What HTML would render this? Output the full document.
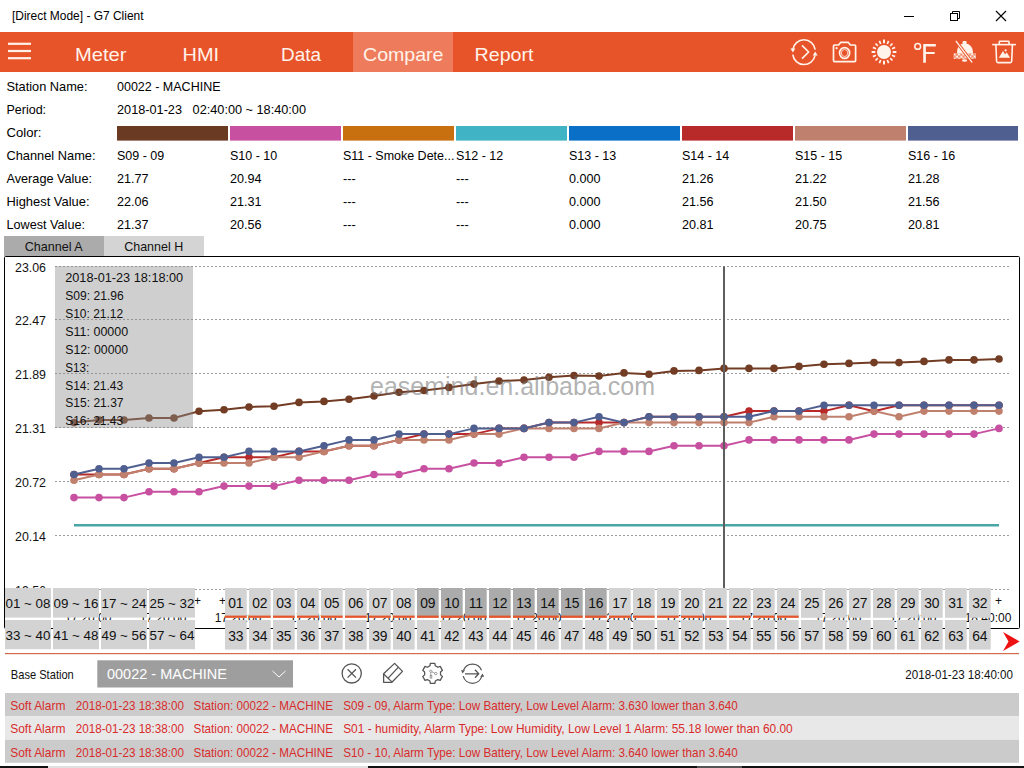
<!DOCTYPE html>
<html><head><meta charset="utf-8"><title>G7 Client</title>
<style>html,body{margin:0;padding:0;width:1024px;height:768px;overflow:hidden;background:#fff}
svg{display:block} text{font-family:"Liberation Sans", sans-serif;white-space:pre}</style></head>
<body><svg width="1024" height="768" viewBox="0 0 1024 768">
<rect x="0" y="0" width="1024" height="768" fill="#fff"/>
<text x="12" y="20" font-size="12.5" fill="#000" textLength="131.5" lengthAdjust="spacingAndGlyphs" >[Direct Mode] - G7 Client</text>
<rect x="904" y="16" width="10" height="1" fill="#000"/>
<rect x="950.5" y="13.5" width="7" height="7" fill="none" stroke="#000" stroke-width="1"/>
<path d="M952.5 13.5 V11.5 H959.5 V18.5 H957.5" fill="none" stroke="#000" stroke-width="1"/>
<path d="M996 11 L1006 21 M1006 11 L996 21" stroke="#000" stroke-width="1.1"/>
<rect x="0" y="32" width="1024" height="40" fill="#E8542A"/>
<rect x="353" y="32" width="100" height="40" fill="#EE7C5C"/>
<rect x="8" y="42.7" width="23" height="2.2" fill="#FFF1E8"/>
<rect x="8" y="49.9" width="23" height="2.2" fill="#FFF1E8"/>
<rect x="8" y="57.1" width="23" height="2.2" fill="#FFF1E8"/>
<text x="75" y="60.6" font-size="19" fill="#FFF3EA" textLength="51.5" lengthAdjust="spacingAndGlyphs" >Meter</text>
<text x="182.5" y="60.6" font-size="19" fill="#FFF3EA" textLength="36.5" lengthAdjust="spacingAndGlyphs" >HMI</text>
<text x="281" y="60.6" font-size="19" fill="#FFF3EA" textLength="40" lengthAdjust="spacingAndGlyphs" >Data</text>
<text x="363" y="60.6" font-size="19" fill="#FFF3EA" textLength="80.5" lengthAdjust="spacingAndGlyphs" >Compare</text>
<text x="474.5" y="60.6" font-size="19" fill="#FFF3EA" textLength="59" lengthAdjust="spacingAndGlyphs" >Report</text>
<g fill="none" stroke="#FFF3EA" stroke-width="1.6"><path d="M792.8 49.6 A11.3 11.3 0 0 1 815.2 49.6"/><path d="M815.1 55.4 A11.3 11.3 0 0 1 792.8 54.6"/><path d="M802 45.4 L808.6 52 L802 58.6"/></g>
<path d="M790.4 48.6 L795.4 48.6 L792.9 52.6 Z" fill="#FFF3EA"/>
<path d="M812.7 55.6 L817.7 55.6 L815.2 51.6 Z" fill="#FFF3EA"/>
<g fill="none" stroke="#FFF3EA" stroke-width="1.7"><path d="M834.5 45 H838.6 L840.8 42.3 H848.2 L850.3 45 H854.6 Q855.6 45 855.6 46 V60.6 Q855.6 61.6 854.6 61.6 H834.5 Q833.5 61.6 833.5 60.6 V46 Q833.5 45 834.5 45 Z"/><ellipse cx="844.6" cy="53" rx="5" ry="5.4"/></g><ellipse cx="844.6" cy="53" rx="3.2" ry="3.5" fill="none" stroke="#FFF3EA" stroke-width="1" stroke-opacity="0.8"/>
<circle cx="836.6" cy="48.2" r="1.1" fill="#FFF3EA"/>
<circle cx="884" cy="52" r="7" fill="#FFF3EA"/><line x1="892.70" y1="52.00" x2="896.40" y2="52.00" stroke="#FFF3EA" stroke-width="2.0"/><line x1="892.04" y1="55.33" x2="895.09" y2="56.59" stroke="#FFF3EA" stroke-width="1.7"/><line x1="890.15" y1="58.15" x2="892.49" y2="60.49" stroke="#FFF3EA" stroke-width="1.7"/><line x1="887.33" y1="60.04" x2="888.59" y2="63.09" stroke="#FFF3EA" stroke-width="1.7"/><line x1="884.00" y1="60.70" x2="884.00" y2="64.40" stroke="#FFF3EA" stroke-width="2.0"/><line x1="880.67" y1="60.04" x2="879.41" y2="63.09" stroke="#FFF3EA" stroke-width="1.7"/><line x1="877.85" y1="58.15" x2="875.51" y2="60.49" stroke="#FFF3EA" stroke-width="1.7"/><line x1="875.96" y1="55.33" x2="872.91" y2="56.59" stroke="#FFF3EA" stroke-width="1.7"/><line x1="875.30" y1="52.00" x2="871.60" y2="52.00" stroke="#FFF3EA" stroke-width="2.0"/><line x1="875.96" y1="48.67" x2="872.91" y2="47.41" stroke="#FFF3EA" stroke-width="1.7"/><line x1="877.85" y1="45.85" x2="875.51" y2="43.51" stroke="#FFF3EA" stroke-width="1.7"/><line x1="880.67" y1="43.96" x2="879.41" y2="40.91" stroke="#FFF3EA" stroke-width="1.7"/><line x1="884.00" y1="43.30" x2="884.00" y2="39.60" stroke="#FFF3EA" stroke-width="2.0"/><line x1="887.33" y1="43.96" x2="888.59" y2="40.91" stroke="#FFF3EA" stroke-width="1.7"/><line x1="890.15" y1="45.85" x2="892.49" y2="43.51" stroke="#FFF3EA" stroke-width="1.7"/><line x1="892.04" y1="48.67" x2="895.09" y2="47.41" stroke="#FFF3EA" stroke-width="1.7"/>
<circle cx="917.7" cy="46.4" r="2.9" fill="none" stroke="#FFF3EA" stroke-width="1.5"/>
<path d="M923.2 43.9 H935.8 V46.4 H925.9 V51.9 H934.7 V54.1 H925.9 V62.8 H923.2 Z" fill="#FFF3EA"/>
<defs><pattern id="chk" x="953.6" y="53.3" width="4.4" height="4.4" patternUnits="userSpaceOnUse"><rect x="0" y="0" width="2.2" height="2.2" fill="#FFF3EA"/><rect x="2.2" y="2.2" width="2.2" height="2.2" fill="#FFF3EA"/><rect x="2.2" y="0" width="2.2" height="2.2" fill="#FFF3EA" fill-opacity="0.35"/><rect x="0" y="2.2" width="2.2" height="2.2" fill="#FFF3EA" fill-opacity="0.35"/></pattern></defs>
<rect x="962.6" y="41" width="4" height="3.5" rx="1" fill="#FFF3EA"/>
<path d="M957 53.4 C957 46.5 960 43.6 964.6 43.6 C969.2 43.6 973 46.5 973 53.4 Z" fill="#FFF3EA"/>
<rect x="953.6" y="53.3" width="22.3" height="5.5" fill="url(#chk)"/>
<ellipse cx="964.6" cy="60.5" rx="2.6" ry="1.2" fill="#FFF3EA"/>
<line x1="956.2" y1="41.3" x2="971.9" y2="62.1" stroke="#E8542A" stroke-width="3.2"/>
<line x1="956.2" y1="41.3" x2="971.9" y2="62.1" stroke="#FFF3EA" stroke-width="1.3" stroke-linecap="round"/>
<g fill="none" stroke="#FFF3EA" stroke-width="1.6" stroke-linejoin="round"><path d="M992.2 44.6 H1015.9"/><path d="M999.3 44.6 V41.8 Q999.3 41.2 1000 41.2 H1008.3 Q1009 41.2 1009 41.8 V44.6"/><path d="M995.9 45 L996.6 61.2 Q996.7 62.6 998 62.6 H1010.3 Q1011.6 62.6 1011.7 61.2 L1012.4 45"/></g>
<path d="M998.8 57.8 L1003 51 L1005.2 54.4 L1006.6 52.2 L1010.1 57.8 Z" fill="#FFF3EA"/>
<circle cx="1005.6" cy="50.3" r="1.1" fill="#FFF3EA"/>
<text x="6.5" y="91.2" font-size="13" fill="#000" textLength="81" lengthAdjust="spacingAndGlyphs" >Station Name:</text>
<text x="6.5" y="114.2" font-size="13" fill="#000" textLength="39.6" lengthAdjust="spacingAndGlyphs" >Period:</text>
<text x="6.5" y="137.2" font-size="13" fill="#000" textLength="35" lengthAdjust="spacingAndGlyphs" >Color:</text>
<text x="6.5" y="160.2" font-size="13" fill="#000" textLength="89" lengthAdjust="spacingAndGlyphs" >Channel Name:</text>
<text x="6.5" y="183.2" font-size="13" fill="#000" textLength="85.5" lengthAdjust="spacingAndGlyphs" >Average Value:</text>
<text x="6.5" y="206.2" font-size="13" fill="#000" textLength="83" lengthAdjust="spacingAndGlyphs" >Highest Value:</text>
<text x="6.5" y="229.2" font-size="13" fill="#000" textLength="78.5" lengthAdjust="spacingAndGlyphs" >Lowest Value:</text>
<text x="117" y="91.2" font-size="13" fill="#000" textLength="103.5" lengthAdjust="spacingAndGlyphs" >00022 - MACHINE</text>
<text x="117" y="114.2" font-size="13" fill="#000" textLength="189" lengthAdjust="spacingAndGlyphs" >2018-01-23   02:40:00 ~ 18:40:00</text>
<rect x="117" y="126" width="111" height="14.6" fill="#6B3A22"/>
<rect x="230" y="126" width="111" height="14.6" fill="#C850A0"/>
<rect x="343" y="126" width="111" height="14.6" fill="#C87010"/>
<rect x="456" y="126" width="111" height="14.6" fill="#40B4C4"/>
<rect x="569" y="126" width="111" height="14.6" fill="#0A6FC6"/>
<rect x="682" y="126" width="111" height="14.6" fill="#B82A2A"/>
<rect x="795" y="126" width="111" height="14.6" fill="#C0806E"/>
<rect x="908" y="126" width="110" height="14.6" fill="#4F5F90"/>
<text x="117" y="160.2" font-size="13" fill="#000" transform="matrix(0.96 0 0 1 4.680 0)" >S09 - 09</text>
<text x="117" y="183.2" font-size="13" fill="#000" transform="matrix(0.97 0 0 1 3.510 0)" >21.77</text>
<text x="117" y="206.2" font-size="13" fill="#000" transform="matrix(0.97 0 0 1 3.510 0)" >22.06</text>
<text x="117" y="229.2" font-size="13" fill="#000" transform="matrix(0.97 0 0 1 3.510 0)" >21.37</text>
<text x="230" y="160.2" font-size="13" fill="#000" transform="matrix(0.96 0 0 1 9.200 0)" >S10 - 10</text>
<text x="230" y="183.2" font-size="13" fill="#000" transform="matrix(0.97 0 0 1 6.900 0)" >20.94</text>
<text x="230" y="206.2" font-size="13" fill="#000" transform="matrix(0.97 0 0 1 6.900 0)" >21.31</text>
<text x="230" y="229.2" font-size="13" fill="#000" transform="matrix(0.97 0 0 1 6.900 0)" >20.56</text>
<text x="343" y="160.2" font-size="13" fill="#000" transform="matrix(0.96 0 0 1 13.720 0)" >S11 - Smoke Dete...</text>
<text x="343" y="183.2" font-size="13" fill="#000" transform="matrix(0.97 0 0 1 10.290 0)" >---</text>
<text x="343" y="206.2" font-size="13" fill="#000" transform="matrix(0.97 0 0 1 10.290 0)" >---</text>
<text x="343" y="229.2" font-size="13" fill="#000" transform="matrix(0.97 0 0 1 10.290 0)" >---</text>
<text x="456" y="160.2" font-size="13" fill="#000" transform="matrix(0.96 0 0 1 18.240 0)" >S12 - 12</text>
<text x="456" y="183.2" font-size="13" fill="#000" transform="matrix(0.97 0 0 1 13.680 0)" >---</text>
<text x="456" y="206.2" font-size="13" fill="#000" transform="matrix(0.97 0 0 1 13.680 0)" >---</text>
<text x="456" y="229.2" font-size="13" fill="#000" transform="matrix(0.97 0 0 1 13.680 0)" >---</text>
<text x="569" y="160.2" font-size="13" fill="#000" transform="matrix(0.96 0 0 1 22.760 0)" >S13 - 13</text>
<text x="569" y="183.2" font-size="13" fill="#000" transform="matrix(0.97 0 0 1 17.070 0)" >0.000</text>
<text x="569" y="206.2" font-size="13" fill="#000" transform="matrix(0.97 0 0 1 17.070 0)" >0.000</text>
<text x="569" y="229.2" font-size="13" fill="#000" transform="matrix(0.97 0 0 1 17.070 0)" >0.000</text>
<text x="682" y="160.2" font-size="13" fill="#000" transform="matrix(0.96 0 0 1 27.280 0)" >S14 - 14</text>
<text x="682" y="183.2" font-size="13" fill="#000" transform="matrix(0.97 0 0 1 20.460 0)" >21.26</text>
<text x="682" y="206.2" font-size="13" fill="#000" transform="matrix(0.97 0 0 1 20.460 0)" >21.56</text>
<text x="682" y="229.2" font-size="13" fill="#000" transform="matrix(0.97 0 0 1 20.460 0)" >20.81</text>
<text x="795" y="160.2" font-size="13" fill="#000" transform="matrix(0.96 0 0 1 31.800 0)" >S15 - 15</text>
<text x="795" y="183.2" font-size="13" fill="#000" transform="matrix(0.97 0 0 1 23.850 0)" >21.22</text>
<text x="795" y="206.2" font-size="13" fill="#000" transform="matrix(0.97 0 0 1 23.850 0)" >21.50</text>
<text x="795" y="229.2" font-size="13" fill="#000" transform="matrix(0.97 0 0 1 23.850 0)" >20.75</text>
<text x="908" y="160.2" font-size="13" fill="#000" transform="matrix(0.96 0 0 1 36.320 0)" >S16 - 16</text>
<text x="908" y="183.2" font-size="13" fill="#000" transform="matrix(0.97 0 0 1 27.240 0)" >21.28</text>
<text x="908" y="206.2" font-size="13" fill="#000" transform="matrix(0.97 0 0 1 27.240 0)" >21.56</text>
<text x="908" y="229.2" font-size="13" fill="#000" transform="matrix(0.97 0 0 1 27.240 0)" >20.81</text>
<rect x="4" y="236" width="100" height="20" fill="#ABABAB"/>
<rect x="104" y="236" width="100" height="20" fill="#D4D4D4"/>
<text x="24.7" y="250.5" font-size="13" fill="#111" textLength="58" lengthAdjust="spacingAndGlyphs" >Channel A</text>
<text x="124.2" y="250.5" font-size="13" fill="#111" textLength="59" lengthAdjust="spacingAndGlyphs" >Channel H</text>
<rect x="4.5" y="256.5" width="1015" height="372" rx="1" fill="#fff" stroke="#000" stroke-width="1"/>
<line x1="55" y1="266.5" x2="1010" y2="266.5" stroke="#9C9C9C" stroke-width="1" stroke-dasharray="2 2"/>
<text x="15" y="272.3" font-size="12.8" fill="#111" textLength="31" lengthAdjust="spacingAndGlyphs" >23.06</text>
<line x1="55" y1="319.5" x2="1010" y2="319.5" stroke="#9C9C9C" stroke-width="1" stroke-dasharray="2 2"/>
<text x="15" y="325.3" font-size="12.8" fill="#111" textLength="31" lengthAdjust="spacingAndGlyphs" >22.47</text>
<line x1="55" y1="373.5" x2="1010" y2="373.5" stroke="#9C9C9C" stroke-width="1" stroke-dasharray="2 2"/>
<text x="15" y="379.3" font-size="12.8" fill="#111" textLength="31" lengthAdjust="spacingAndGlyphs" >21.89</text>
<line x1="55" y1="427.5" x2="1010" y2="427.5" stroke="#9C9C9C" stroke-width="1" stroke-dasharray="2 2"/>
<text x="15" y="433.3" font-size="12.8" fill="#111" textLength="31" lengthAdjust="spacingAndGlyphs" >21.31</text>
<line x1="55" y1="481.5" x2="1010" y2="481.5" stroke="#9C9C9C" stroke-width="1" stroke-dasharray="2 2"/>
<text x="15" y="487.3" font-size="12.8" fill="#111" textLength="31" lengthAdjust="spacingAndGlyphs" >20.72</text>
<line x1="55" y1="535.5" x2="1010" y2="535.5" stroke="#9C9C9C" stroke-width="1" stroke-dasharray="2 2"/>
<text x="15" y="541.3" font-size="12.8" fill="#111" textLength="31" lengthAdjust="spacingAndGlyphs" >20.14</text>
<line x1="55" y1="589.5" x2="1010" y2="589.5" stroke="#9C9C9C" stroke-width="1" stroke-dasharray="2 2"/>
<text x="15" y="595.3" font-size="12.8" fill="#111" textLength="31" lengthAdjust="spacingAndGlyphs" >19.56</text>
<rect x="74" y="524" width="925" height="2.5" fill="#4AA6A6"/>
<polyline points="74.0,422.6 99.0,420.0 124.0,420.0 149.0,418.0 174.0,418.0 199.0,411.3 224.0,409.7 249.0,407.0 274.0,406.2 299.0,402.4 324.0,401.4 349.0,399.3 374.0,396.0 399.0,392.2 424.0,390.5 449.0,387.4 474.0,384.1 499.0,381.0 524.0,380.0 549.0,377.2 574.0,375.5 599.0,376.0 624.0,372.9 649.0,374.2 674.0,370.9 699.0,370.4 724.0,368.4 749.0,368.4 774.0,368.4 799.0,366.4 824.0,364.3 849.0,363.4 874.0,362.6 899.0,362.6 924.0,361.4 949.0,359.9 974.0,359.9 999.0,359.0" fill="none" stroke="#723D24" stroke-width="2"/>
<circle cx="74.0" cy="422.6" r="3.8" fill="#723D24"/><circle cx="99.0" cy="420.0" r="3.8" fill="#723D24"/><circle cx="124.0" cy="420.0" r="3.8" fill="#723D24"/><circle cx="149.0" cy="418.0" r="3.8" fill="#723D24"/><circle cx="174.0" cy="418.0" r="3.8" fill="#723D24"/><circle cx="199.0" cy="411.3" r="3.8" fill="#723D24"/><circle cx="224.0" cy="409.7" r="3.8" fill="#723D24"/><circle cx="249.0" cy="407.0" r="3.8" fill="#723D24"/><circle cx="274.0" cy="406.2" r="3.8" fill="#723D24"/><circle cx="299.0" cy="402.4" r="3.8" fill="#723D24"/><circle cx="324.0" cy="401.4" r="3.8" fill="#723D24"/><circle cx="349.0" cy="399.3" r="3.8" fill="#723D24"/><circle cx="374.0" cy="396.0" r="3.8" fill="#723D24"/><circle cx="399.0" cy="392.2" r="3.8" fill="#723D24"/><circle cx="424.0" cy="390.5" r="3.8" fill="#723D24"/><circle cx="449.0" cy="387.4" r="3.8" fill="#723D24"/><circle cx="474.0" cy="384.1" r="3.8" fill="#723D24"/><circle cx="499.0" cy="381.0" r="3.8" fill="#723D24"/><circle cx="524.0" cy="380.0" r="3.8" fill="#723D24"/><circle cx="549.0" cy="377.2" r="3.8" fill="#723D24"/><circle cx="574.0" cy="375.5" r="3.8" fill="#723D24"/><circle cx="599.0" cy="376.0" r="3.8" fill="#723D24"/><circle cx="624.0" cy="372.9" r="3.8" fill="#723D24"/><circle cx="649.0" cy="374.2" r="3.8" fill="#723D24"/><circle cx="674.0" cy="370.9" r="3.8" fill="#723D24"/><circle cx="699.0" cy="370.4" r="3.8" fill="#723D24"/><circle cx="724.0" cy="368.4" r="3.8" fill="#723D24"/><circle cx="749.0" cy="368.4" r="3.8" fill="#723D24"/><circle cx="774.0" cy="368.4" r="3.8" fill="#723D24"/><circle cx="799.0" cy="366.4" r="3.8" fill="#723D24"/><circle cx="824.0" cy="364.3" r="3.8" fill="#723D24"/><circle cx="849.0" cy="363.4" r="3.8" fill="#723D24"/><circle cx="874.0" cy="362.6" r="3.8" fill="#723D24"/><circle cx="899.0" cy="362.6" r="3.8" fill="#723D24"/><circle cx="924.0" cy="361.4" r="3.8" fill="#723D24"/><circle cx="949.0" cy="359.9" r="3.8" fill="#723D24"/><circle cx="974.0" cy="359.9" r="3.8" fill="#723D24"/><circle cx="999.0" cy="359.0" r="3.8" fill="#723D24"/>
<polyline points="74.0,497.6 99.0,497.6 124.0,497.6 149.0,491.8 174.0,491.8 199.0,491.8 224.0,486.1 249.0,486.1 274.0,486.1 299.0,480.3 324.0,480.3 349.0,480.3 374.0,474.5 399.0,474.5 424.0,468.8 449.0,468.8 474.0,463.0 499.0,463.0 524.0,457.2 549.0,457.2 574.0,457.2 599.0,451.4 624.0,451.4 649.0,451.4 674.0,445.7 699.0,445.7 724.0,445.7 749.0,439.9 774.0,439.9 799.0,439.9 824.0,439.9 849.0,439.9 874.0,434.1 899.0,434.1 924.0,434.1 949.0,434.1 974.0,434.1 999.0,428.4" fill="none" stroke="#C850A0" stroke-width="2"/>
<circle cx="74.0" cy="497.6" r="3.8" fill="#C850A0"/><circle cx="99.0" cy="497.6" r="3.8" fill="#C850A0"/><circle cx="124.0" cy="497.6" r="3.8" fill="#C850A0"/><circle cx="149.0" cy="491.8" r="3.8" fill="#C850A0"/><circle cx="174.0" cy="491.8" r="3.8" fill="#C850A0"/><circle cx="199.0" cy="491.8" r="3.8" fill="#C850A0"/><circle cx="224.0" cy="486.1" r="3.8" fill="#C850A0"/><circle cx="249.0" cy="486.1" r="3.8" fill="#C850A0"/><circle cx="274.0" cy="486.1" r="3.8" fill="#C850A0"/><circle cx="299.0" cy="480.3" r="3.8" fill="#C850A0"/><circle cx="324.0" cy="480.3" r="3.8" fill="#C850A0"/><circle cx="349.0" cy="480.3" r="3.8" fill="#C850A0"/><circle cx="374.0" cy="474.5" r="3.8" fill="#C850A0"/><circle cx="399.0" cy="474.5" r="3.8" fill="#C850A0"/><circle cx="424.0" cy="468.8" r="3.8" fill="#C850A0"/><circle cx="449.0" cy="468.8" r="3.8" fill="#C850A0"/><circle cx="474.0" cy="463.0" r="3.8" fill="#C850A0"/><circle cx="499.0" cy="463.0" r="3.8" fill="#C850A0"/><circle cx="524.0" cy="457.2" r="3.8" fill="#C850A0"/><circle cx="549.0" cy="457.2" r="3.8" fill="#C850A0"/><circle cx="574.0" cy="457.2" r="3.8" fill="#C850A0"/><circle cx="599.0" cy="451.4" r="3.8" fill="#C850A0"/><circle cx="624.0" cy="451.4" r="3.8" fill="#C850A0"/><circle cx="649.0" cy="451.4" r="3.8" fill="#C850A0"/><circle cx="674.0" cy="445.7" r="3.8" fill="#C850A0"/><circle cx="699.0" cy="445.7" r="3.8" fill="#C850A0"/><circle cx="724.0" cy="445.7" r="3.8" fill="#C850A0"/><circle cx="749.0" cy="439.9" r="3.8" fill="#C850A0"/><circle cx="774.0" cy="439.9" r="3.8" fill="#C850A0"/><circle cx="799.0" cy="439.9" r="3.8" fill="#C850A0"/><circle cx="824.0" cy="439.9" r="3.8" fill="#C850A0"/><circle cx="849.0" cy="439.9" r="3.8" fill="#C850A0"/><circle cx="874.0" cy="434.1" r="3.8" fill="#C850A0"/><circle cx="899.0" cy="434.1" r="3.8" fill="#C850A0"/><circle cx="924.0" cy="434.1" r="3.8" fill="#C850A0"/><circle cx="949.0" cy="434.1" r="3.8" fill="#C850A0"/><circle cx="974.0" cy="434.1" r="3.8" fill="#C850A0"/><circle cx="999.0" cy="428.4" r="3.8" fill="#C850A0"/>
<polyline points="74.0,474.5 99.0,474.5 124.0,474.5 149.0,468.8 174.0,468.8 199.0,463.0 224.0,457.2 249.0,457.2 274.0,457.2 299.0,451.4 324.0,451.4 349.0,445.7 374.0,445.7 399.0,439.9 424.0,434.1 449.0,434.1 474.0,434.1 499.0,428.4 524.0,428.4 549.0,422.6 574.0,422.6 599.0,422.6 624.0,422.6 649.0,416.8 674.0,416.8 699.0,416.8 724.0,416.8 749.0,411.1 774.0,411.1 799.0,411.1 824.0,411.1 849.0,405.3 874.0,411.1 899.0,405.3 924.0,405.3 949.0,405.3 974.0,405.3 999.0,405.3" fill="none" stroke="#B82A2A" stroke-width="2"/>
<circle cx="74.0" cy="474.5" r="3.8" fill="#B82A2A"/><circle cx="99.0" cy="474.5" r="3.8" fill="#B82A2A"/><circle cx="124.0" cy="474.5" r="3.8" fill="#B82A2A"/><circle cx="149.0" cy="468.8" r="3.8" fill="#B82A2A"/><circle cx="174.0" cy="468.8" r="3.8" fill="#B82A2A"/><circle cx="199.0" cy="463.0" r="3.8" fill="#B82A2A"/><circle cx="224.0" cy="457.2" r="3.8" fill="#B82A2A"/><circle cx="249.0" cy="457.2" r="3.8" fill="#B82A2A"/><circle cx="274.0" cy="457.2" r="3.8" fill="#B82A2A"/><circle cx="299.0" cy="451.4" r="3.8" fill="#B82A2A"/><circle cx="324.0" cy="451.4" r="3.8" fill="#B82A2A"/><circle cx="349.0" cy="445.7" r="3.8" fill="#B82A2A"/><circle cx="374.0" cy="445.7" r="3.8" fill="#B82A2A"/><circle cx="399.0" cy="439.9" r="3.8" fill="#B82A2A"/><circle cx="424.0" cy="434.1" r="3.8" fill="#B82A2A"/><circle cx="449.0" cy="434.1" r="3.8" fill="#B82A2A"/><circle cx="474.0" cy="434.1" r="3.8" fill="#B82A2A"/><circle cx="499.0" cy="428.4" r="3.8" fill="#B82A2A"/><circle cx="524.0" cy="428.4" r="3.8" fill="#B82A2A"/><circle cx="549.0" cy="422.6" r="3.8" fill="#B82A2A"/><circle cx="574.0" cy="422.6" r="3.8" fill="#B82A2A"/><circle cx="599.0" cy="422.6" r="3.8" fill="#B82A2A"/><circle cx="624.0" cy="422.6" r="3.8" fill="#B82A2A"/><circle cx="649.0" cy="416.8" r="3.8" fill="#B82A2A"/><circle cx="674.0" cy="416.8" r="3.8" fill="#B82A2A"/><circle cx="699.0" cy="416.8" r="3.8" fill="#B82A2A"/><circle cx="724.0" cy="416.8" r="3.8" fill="#B82A2A"/><circle cx="749.0" cy="411.1" r="3.8" fill="#B82A2A"/><circle cx="774.0" cy="411.1" r="3.8" fill="#B82A2A"/><circle cx="799.0" cy="411.1" r="3.8" fill="#B82A2A"/><circle cx="824.0" cy="411.1" r="3.8" fill="#B82A2A"/><circle cx="849.0" cy="405.3" r="3.8" fill="#B82A2A"/><circle cx="874.0" cy="411.1" r="3.8" fill="#B82A2A"/><circle cx="899.0" cy="405.3" r="3.8" fill="#B82A2A"/><circle cx="924.0" cy="405.3" r="3.8" fill="#B82A2A"/><circle cx="949.0" cy="405.3" r="3.8" fill="#B82A2A"/><circle cx="974.0" cy="405.3" r="3.8" fill="#B82A2A"/><circle cx="999.0" cy="405.3" r="3.8" fill="#B82A2A"/>
<polyline points="74.0,480.3 99.0,474.5 124.0,474.5 149.0,468.8 174.0,468.8 199.0,463.0 224.0,463.0 249.0,463.0 274.0,457.2 299.0,457.2 324.0,451.4 349.0,445.7 374.0,445.7 399.0,439.9 424.0,439.9 449.0,439.9 474.0,434.1 499.0,434.1 524.0,428.4 549.0,428.4 574.0,428.4 599.0,428.4 624.0,422.6 649.0,422.6 674.0,422.6 699.0,422.6 724.0,422.6 749.0,422.6 774.0,416.8 799.0,416.8 824.0,416.8 849.0,416.8 874.0,411.1 899.0,416.8 924.0,411.1 949.0,411.1 974.0,411.1 999.0,411.1" fill="none" stroke="#C0806E" stroke-width="2"/>
<circle cx="74.0" cy="480.3" r="3.8" fill="#C0806E"/><circle cx="99.0" cy="474.5" r="3.8" fill="#C0806E"/><circle cx="124.0" cy="474.5" r="3.8" fill="#C0806E"/><circle cx="149.0" cy="468.8" r="3.8" fill="#C0806E"/><circle cx="174.0" cy="468.8" r="3.8" fill="#C0806E"/><circle cx="199.0" cy="463.0" r="3.8" fill="#C0806E"/><circle cx="224.0" cy="463.0" r="3.8" fill="#C0806E"/><circle cx="249.0" cy="463.0" r="3.8" fill="#C0806E"/><circle cx="274.0" cy="457.2" r="3.8" fill="#C0806E"/><circle cx="299.0" cy="457.2" r="3.8" fill="#C0806E"/><circle cx="324.0" cy="451.4" r="3.8" fill="#C0806E"/><circle cx="349.0" cy="445.7" r="3.8" fill="#C0806E"/><circle cx="374.0" cy="445.7" r="3.8" fill="#C0806E"/><circle cx="399.0" cy="439.9" r="3.8" fill="#C0806E"/><circle cx="424.0" cy="439.9" r="3.8" fill="#C0806E"/><circle cx="449.0" cy="439.9" r="3.8" fill="#C0806E"/><circle cx="474.0" cy="434.1" r="3.8" fill="#C0806E"/><circle cx="499.0" cy="434.1" r="3.8" fill="#C0806E"/><circle cx="524.0" cy="428.4" r="3.8" fill="#C0806E"/><circle cx="549.0" cy="428.4" r="3.8" fill="#C0806E"/><circle cx="574.0" cy="428.4" r="3.8" fill="#C0806E"/><circle cx="599.0" cy="428.4" r="3.8" fill="#C0806E"/><circle cx="624.0" cy="422.6" r="3.8" fill="#C0806E"/><circle cx="649.0" cy="422.6" r="3.8" fill="#C0806E"/><circle cx="674.0" cy="422.6" r="3.8" fill="#C0806E"/><circle cx="699.0" cy="422.6" r="3.8" fill="#C0806E"/><circle cx="724.0" cy="422.6" r="3.8" fill="#C0806E"/><circle cx="749.0" cy="422.6" r="3.8" fill="#C0806E"/><circle cx="774.0" cy="416.8" r="3.8" fill="#C0806E"/><circle cx="799.0" cy="416.8" r="3.8" fill="#C0806E"/><circle cx="824.0" cy="416.8" r="3.8" fill="#C0806E"/><circle cx="849.0" cy="416.8" r="3.8" fill="#C0806E"/><circle cx="874.0" cy="411.1" r="3.8" fill="#C0806E"/><circle cx="899.0" cy="416.8" r="3.8" fill="#C0806E"/><circle cx="924.0" cy="411.1" r="3.8" fill="#C0806E"/><circle cx="949.0" cy="411.1" r="3.8" fill="#C0806E"/><circle cx="974.0" cy="411.1" r="3.8" fill="#C0806E"/><circle cx="999.0" cy="411.1" r="3.8" fill="#C0806E"/>
<polyline points="74.0,474.5 99.0,468.8 124.0,468.8 149.0,463.0 174.0,463.0 199.0,457.2 224.0,457.2 249.0,451.4 274.0,451.4 299.0,451.4 324.0,445.7 349.0,439.9 374.0,439.9 399.0,434.1 424.0,434.1 449.0,434.1 474.0,428.4 499.0,428.4 524.0,428.4 549.0,422.6 574.0,422.6 599.0,416.8 624.0,422.6 649.0,416.8 674.0,416.8 699.0,416.8 724.0,416.8 749.0,416.8 774.0,411.1 799.0,411.1 824.0,405.3 849.0,405.3 874.0,405.3 899.0,405.3 924.0,405.3 949.0,405.3 974.0,405.3 999.0,405.3" fill="none" stroke="#4F5F90" stroke-width="2"/>
<circle cx="74.0" cy="474.5" r="3.8" fill="#4F5F90"/><circle cx="99.0" cy="468.8" r="3.8" fill="#4F5F90"/><circle cx="124.0" cy="468.8" r="3.8" fill="#4F5F90"/><circle cx="149.0" cy="463.0" r="3.8" fill="#4F5F90"/><circle cx="174.0" cy="463.0" r="3.8" fill="#4F5F90"/><circle cx="199.0" cy="457.2" r="3.8" fill="#4F5F90"/><circle cx="224.0" cy="457.2" r="3.8" fill="#4F5F90"/><circle cx="249.0" cy="451.4" r="3.8" fill="#4F5F90"/><circle cx="274.0" cy="451.4" r="3.8" fill="#4F5F90"/><circle cx="299.0" cy="451.4" r="3.8" fill="#4F5F90"/><circle cx="324.0" cy="445.7" r="3.8" fill="#4F5F90"/><circle cx="349.0" cy="439.9" r="3.8" fill="#4F5F90"/><circle cx="374.0" cy="439.9" r="3.8" fill="#4F5F90"/><circle cx="399.0" cy="434.1" r="3.8" fill="#4F5F90"/><circle cx="424.0" cy="434.1" r="3.8" fill="#4F5F90"/><circle cx="449.0" cy="434.1" r="3.8" fill="#4F5F90"/><circle cx="474.0" cy="428.4" r="3.8" fill="#4F5F90"/><circle cx="499.0" cy="428.4" r="3.8" fill="#4F5F90"/><circle cx="524.0" cy="428.4" r="3.8" fill="#4F5F90"/><circle cx="549.0" cy="422.6" r="3.8" fill="#4F5F90"/><circle cx="574.0" cy="422.6" r="3.8" fill="#4F5F90"/><circle cx="599.0" cy="416.8" r="3.8" fill="#4F5F90"/><circle cx="624.0" cy="422.6" r="3.8" fill="#4F5F90"/><circle cx="649.0" cy="416.8" r="3.8" fill="#4F5F90"/><circle cx="674.0" cy="416.8" r="3.8" fill="#4F5F90"/><circle cx="699.0" cy="416.8" r="3.8" fill="#4F5F90"/><circle cx="724.0" cy="416.8" r="3.8" fill="#4F5F90"/><circle cx="749.0" cy="416.8" r="3.8" fill="#4F5F90"/><circle cx="774.0" cy="411.1" r="3.8" fill="#4F5F90"/><circle cx="799.0" cy="411.1" r="3.8" fill="#4F5F90"/><circle cx="824.0" cy="405.3" r="3.8" fill="#4F5F90"/><circle cx="849.0" cy="405.3" r="3.8" fill="#4F5F90"/><circle cx="874.0" cy="405.3" r="3.8" fill="#4F5F90"/><circle cx="899.0" cy="405.3" r="3.8" fill="#4F5F90"/><circle cx="924.0" cy="405.3" r="3.8" fill="#4F5F90"/><circle cx="949.0" cy="405.3" r="3.8" fill="#4F5F90"/><circle cx="974.0" cy="405.3" r="3.8" fill="#4F5F90"/><circle cx="999.0" cy="405.3" r="3.8" fill="#4F5F90"/>
<rect x="723" y="266.5" width="2" height="321.5" fill="#5E5E5E"/>
<text x="370" y="394.5" font-size="25" fill="#707070" fill-opacity="0.55" textLength="285" lengthAdjust="spacingAndGlyphs">easemind.en.alibaba.com</text>
<rect x="55" y="266" width="138" height="162" fill="rgb(140,140,140)" fill-opacity="0.42"/>
<text x="65.2" y="281.8" font-size="12.8" fill="#111" textLength="118" lengthAdjust="spacingAndGlyphs" >2018-01-23 18:18:00</text>
<text x="65.2" y="299.75" font-size="12.8" fill="#111" textLength="58.5" lengthAdjust="spacingAndGlyphs" >S09: 21.96</text>
<text x="65.2" y="317.7" font-size="12.8" fill="#111" textLength="58" lengthAdjust="spacingAndGlyphs" >S10: 21.12</text>
<text x="65.2" y="335.65" font-size="12.8" fill="#111" textLength="63" lengthAdjust="spacingAndGlyphs" >S11: 00000</text>
<text x="65.2" y="353.6" font-size="12.8" fill="#111" textLength="63" lengthAdjust="spacingAndGlyphs" >S12: 00000</text>
<text x="65.2" y="371.55" font-size="12.8" fill="#111" textLength="24" lengthAdjust="spacingAndGlyphs" >S13:</text>
<text x="65.2" y="389.5" font-size="12.8" fill="#111" textLength="58" lengthAdjust="spacingAndGlyphs" >S14: 21.43</text>
<text x="65.2" y="407.45" font-size="12.8" fill="#111" textLength="58.4" lengthAdjust="spacingAndGlyphs" >S15: 21.37</text>
<text x="65.2" y="425.4" font-size="12.8" fill="#111" textLength="58" lengthAdjust="spacingAndGlyphs" >S16: 21.43</text>
<text x="194" y="605" font-size="12" fill="#111" >+</text>
<text x="219" y="605" font-size="12" fill="#111" >+</text>
<text x="995" y="605" font-size="12" fill="#111" >+</text>
<text x="88" y="622" font-size="12.5" fill="#111" transform="matrix(0.96 0 0 1 3.520 0)" text-anchor="middle" >17:20:00</text>
<text x="163" y="622" font-size="12.5" fill="#111" transform="matrix(0.96 0 0 1 6.520 0)" text-anchor="middle" >17:20:00</text>
<text x="238" y="622" font-size="12.5" fill="#111" transform="matrix(0.96 0 0 1 9.520 0)" text-anchor="middle" >17:20:00</text>
<text x="313" y="622" font-size="12.5" fill="#111" transform="matrix(0.96 0 0 1 12.520 0)" text-anchor="middle" >17:20:00</text>
<text x="388" y="622" font-size="12.5" fill="#111" transform="matrix(0.96 0 0 1 15.520 0)" text-anchor="middle" >17:20:00</text>
<text x="463" y="622" font-size="12.5" fill="#111" transform="matrix(0.96 0 0 1 18.520 0)" text-anchor="middle" >17:20:00</text>
<text x="538" y="622" font-size="12.5" fill="#111" transform="matrix(0.96 0 0 1 21.520 0)" text-anchor="middle" >17:20:00</text>
<text x="613" y="622" font-size="12.5" fill="#111" transform="matrix(0.96 0 0 1 24.520 0)" text-anchor="middle" >17:20:00</text>
<text x="688" y="622" font-size="12.5" fill="#111" transform="matrix(0.96 0 0 1 27.520 0)" text-anchor="middle" >17:20:00</text>
<text x="763" y="622" font-size="12.5" fill="#111" transform="matrix(0.96 0 0 1 30.520 0)" text-anchor="middle" >17:20:00</text>
<text x="838" y="622" font-size="12.5" fill="#111" transform="matrix(0.96 0 0 1 33.520 0)" text-anchor="middle" >17:20:00</text>
<text x="913" y="622" font-size="12.5" fill="#111" transform="matrix(0.96 0 0 1 36.520 0)" text-anchor="middle" >17:20:00</text>
<text x="988" y="622" font-size="12.5" fill="#111" transform="matrix(0.96 0 0 1 39.520 0)" text-anchor="middle" >18:40:00</text>
<rect x="5" y="588" width="46" height="29.6" fill="#D3D3D3"/>
<rect x="5" y="620" width="46" height="29.2" fill="#D3D3D3"/>
<text x="5.5" y="608.4" font-size="13" fill="#111" textLength="45" lengthAdjust="spacingAndGlyphs" >01 ~ 08</text>
<text x="5.5" y="640.4" font-size="13" fill="#111" textLength="45" lengthAdjust="spacingAndGlyphs" >33 ~ 40</text>
<rect x="53" y="588" width="46" height="29.6" fill="#D3D3D3"/>
<rect x="53" y="620" width="46" height="29.2" fill="#D3D3D3"/>
<text x="53.5" y="608.4" font-size="13" fill="#111" textLength="45" lengthAdjust="spacingAndGlyphs" >09 ~ 16</text>
<text x="53.5" y="640.4" font-size="13" fill="#111" textLength="45" lengthAdjust="spacingAndGlyphs" >41 ~ 48</text>
<rect x="101" y="588" width="46" height="29.6" fill="#D3D3D3"/>
<rect x="101" y="620" width="46" height="29.2" fill="#D3D3D3"/>
<text x="101.5" y="608.4" font-size="13" fill="#111" textLength="45" lengthAdjust="spacingAndGlyphs" >17 ~ 24</text>
<text x="101.5" y="640.4" font-size="13" fill="#111" textLength="45" lengthAdjust="spacingAndGlyphs" >49 ~ 56</text>
<rect x="149" y="588" width="46" height="29.6" fill="#D3D3D3"/>
<rect x="149" y="620" width="46" height="29.2" fill="#D3D3D3"/>
<text x="149.5" y="608.4" font-size="13" fill="#111" textLength="45" lengthAdjust="spacingAndGlyphs" >25 ~ 32</text>
<text x="149.5" y="640.4" font-size="13" fill="#111" textLength="45" lengthAdjust="spacingAndGlyphs" >57 ~ 64</text>
<rect x="225" y="588" width="21.7" height="29.8" fill="#D3D3D3"/>
<rect x="225" y="615.6" width="21.7" height="2.2" fill="#E8542A"/>
<rect x="225" y="620" width="21.7" height="29.6" fill="#D3D3D3"/>
<text x="235.85" y="608" font-size="15.4" fill="#111" transform="matrix(0.9 0 0 1 23.585 0)" text-anchor="middle" >01</text>
<text x="235.85" y="641.2" font-size="15.4" fill="#111" transform="matrix(0.9 0 0 1 23.585 0)" text-anchor="middle" >33</text>
<rect x="249" y="588" width="21.7" height="29.8" fill="#D3D3D3"/>
<rect x="249" y="615.6" width="21.7" height="2.2" fill="#E8542A"/>
<rect x="249" y="620" width="21.7" height="29.6" fill="#D3D3D3"/>
<text x="259.85" y="608" font-size="15.4" fill="#111" transform="matrix(0.9 0 0 1 25.985 0)" text-anchor="middle" >02</text>
<text x="259.85" y="641.2" font-size="15.4" fill="#111" transform="matrix(0.9 0 0 1 25.985 0)" text-anchor="middle" >34</text>
<rect x="273" y="588" width="21.7" height="29.8" fill="#D3D3D3"/>
<rect x="273" y="615.6" width="21.7" height="2.2" fill="#E8542A"/>
<rect x="273" y="620" width="21.7" height="29.6" fill="#D3D3D3"/>
<text x="283.85" y="608" font-size="15.4" fill="#111" transform="matrix(0.9 0 0 1 28.385 0)" text-anchor="middle" >03</text>
<text x="283.85" y="641.2" font-size="15.4" fill="#111" transform="matrix(0.9 0 0 1 28.385 0)" text-anchor="middle" >35</text>
<rect x="297" y="588" width="21.7" height="29.8" fill="#D3D3D3"/>
<rect x="297" y="615.6" width="21.7" height="2.2" fill="#E8542A"/>
<rect x="297" y="620" width="21.7" height="29.6" fill="#D3D3D3"/>
<text x="307.85" y="608" font-size="15.4" fill="#111" transform="matrix(0.9 0 0 1 30.785 0)" text-anchor="middle" >04</text>
<text x="307.85" y="641.2" font-size="15.4" fill="#111" transform="matrix(0.9 0 0 1 30.785 0)" text-anchor="middle" >36</text>
<rect x="321" y="588" width="21.7" height="29.8" fill="#D3D3D3"/>
<rect x="321" y="615.6" width="21.7" height="2.2" fill="#E8542A"/>
<rect x="321" y="620" width="21.7" height="29.6" fill="#D3D3D3"/>
<text x="331.85" y="608" font-size="15.4" fill="#111" transform="matrix(0.9 0 0 1 33.185 0)" text-anchor="middle" >05</text>
<text x="331.85" y="641.2" font-size="15.4" fill="#111" transform="matrix(0.9 0 0 1 33.185 0)" text-anchor="middle" >37</text>
<rect x="345" y="588" width="21.7" height="29.8" fill="#D3D3D3"/>
<rect x="345" y="615.6" width="21.7" height="2.2" fill="#E8542A"/>
<rect x="345" y="620" width="21.7" height="29.6" fill="#D3D3D3"/>
<text x="355.85" y="608" font-size="15.4" fill="#111" transform="matrix(0.9 0 0 1 35.585 0)" text-anchor="middle" >06</text>
<text x="355.85" y="641.2" font-size="15.4" fill="#111" transform="matrix(0.9 0 0 1 35.585 0)" text-anchor="middle" >38</text>
<rect x="369" y="588" width="21.7" height="29.8" fill="#D3D3D3"/>
<rect x="369" y="615.6" width="21.7" height="2.2" fill="#E8542A"/>
<rect x="369" y="620" width="21.7" height="29.6" fill="#D3D3D3"/>
<text x="379.85" y="608" font-size="15.4" fill="#111" transform="matrix(0.9 0 0 1 37.985 0)" text-anchor="middle" >07</text>
<text x="379.85" y="641.2" font-size="15.4" fill="#111" transform="matrix(0.9 0 0 1 37.985 0)" text-anchor="middle" >39</text>
<rect x="393" y="588" width="21.7" height="29.8" fill="#D3D3D3"/>
<rect x="393" y="615.6" width="21.7" height="2.2" fill="#E8542A"/>
<rect x="393" y="620" width="21.7" height="29.6" fill="#D3D3D3"/>
<text x="403.85" y="608" font-size="15.4" fill="#111" transform="matrix(0.9 0 0 1 40.385 0)" text-anchor="middle" >08</text>
<text x="403.85" y="641.2" font-size="15.4" fill="#111" transform="matrix(0.9 0 0 1 40.385 0)" text-anchor="middle" >40</text>
<rect x="417" y="588" width="21.7" height="29.8" fill="#ABABAB"/>
<rect x="417" y="615.6" width="21.7" height="2.2" fill="#E8542A"/>
<rect x="417" y="620" width="21.7" height="29.6" fill="#D3D3D3"/>
<text x="427.85" y="608" font-size="15.4" fill="#111" transform="matrix(0.9 0 0 1 42.785 0)" text-anchor="middle" >09</text>
<text x="427.85" y="641.2" font-size="15.4" fill="#111" transform="matrix(0.9 0 0 1 42.785 0)" text-anchor="middle" >41</text>
<rect x="441" y="588" width="21.7" height="29.8" fill="#ABABAB"/>
<rect x="441" y="615.6" width="21.7" height="2.2" fill="#E8542A"/>
<rect x="441" y="620" width="21.7" height="29.6" fill="#D3D3D3"/>
<text x="451.85" y="608" font-size="15.4" fill="#111" transform="matrix(0.9 0 0 1 45.185 0)" text-anchor="middle" >10</text>
<text x="451.85" y="641.2" font-size="15.4" fill="#111" transform="matrix(0.9 0 0 1 45.185 0)" text-anchor="middle" >42</text>
<rect x="465" y="588" width="21.7" height="29.8" fill="#ABABAB"/>
<rect x="465" y="615.6" width="21.7" height="2.2" fill="#E8542A"/>
<rect x="465" y="620" width="21.7" height="29.6" fill="#D3D3D3"/>
<text x="475.85" y="608" font-size="15.4" fill="#111" transform="matrix(0.9 0 0 1 47.585 0)" text-anchor="middle" >11</text>
<text x="475.85" y="641.2" font-size="15.4" fill="#111" transform="matrix(0.9 0 0 1 47.585 0)" text-anchor="middle" >43</text>
<rect x="489" y="588" width="21.7" height="29.8" fill="#ABABAB"/>
<rect x="489" y="615.6" width="21.7" height="2.2" fill="#E8542A"/>
<rect x="489" y="620" width="21.7" height="29.6" fill="#D3D3D3"/>
<text x="499.85" y="608" font-size="15.4" fill="#111" transform="matrix(0.9 0 0 1 49.985 0)" text-anchor="middle" >12</text>
<text x="499.85" y="641.2" font-size="15.4" fill="#111" transform="matrix(0.9 0 0 1 49.985 0)" text-anchor="middle" >44</text>
<rect x="513" y="588" width="21.7" height="29.8" fill="#ABABAB"/>
<rect x="513" y="615.6" width="21.7" height="2.2" fill="#E8542A"/>
<rect x="513" y="620" width="21.7" height="29.6" fill="#D3D3D3"/>
<text x="523.85" y="608" font-size="15.4" fill="#111" transform="matrix(0.9 0 0 1 52.385 0)" text-anchor="middle" >13</text>
<text x="523.85" y="641.2" font-size="15.4" fill="#111" transform="matrix(0.9 0 0 1 52.385 0)" text-anchor="middle" >45</text>
<rect x="537" y="588" width="21.7" height="29.8" fill="#ABABAB"/>
<rect x="537" y="615.6" width="21.7" height="2.2" fill="#E8542A"/>
<rect x="537" y="620" width="21.7" height="29.6" fill="#D3D3D3"/>
<text x="547.85" y="608" font-size="15.4" fill="#111" transform="matrix(0.9 0 0 1 54.785 0)" text-anchor="middle" >14</text>
<text x="547.85" y="641.2" font-size="15.4" fill="#111" transform="matrix(0.9 0 0 1 54.785 0)" text-anchor="middle" >46</text>
<rect x="561" y="588" width="21.7" height="29.8" fill="#ABABAB"/>
<rect x="561" y="615.6" width="21.7" height="2.2" fill="#E8542A"/>
<rect x="561" y="620" width="21.7" height="29.6" fill="#D3D3D3"/>
<text x="571.85" y="608" font-size="15.4" fill="#111" transform="matrix(0.9 0 0 1 57.185 0)" text-anchor="middle" >15</text>
<text x="571.85" y="641.2" font-size="15.4" fill="#111" transform="matrix(0.9 0 0 1 57.185 0)" text-anchor="middle" >47</text>
<rect x="585" y="588" width="21.7" height="29.8" fill="#ABABAB"/>
<rect x="585" y="615.6" width="21.7" height="2.2" fill="#E8542A"/>
<rect x="585" y="620" width="21.7" height="29.6" fill="#D3D3D3"/>
<text x="595.85" y="608" font-size="15.4" fill="#111" transform="matrix(0.9 0 0 1 59.585 0)" text-anchor="middle" >16</text>
<text x="595.85" y="641.2" font-size="15.4" fill="#111" transform="matrix(0.9 0 0 1 59.585 0)" text-anchor="middle" >48</text>
<rect x="609" y="588" width="21.7" height="29.8" fill="#D3D3D3"/>
<rect x="609" y="615.6" width="21.7" height="2.2" fill="#E8542A"/>
<rect x="609" y="620" width="21.7" height="29.6" fill="#D3D3D3"/>
<text x="619.85" y="608" font-size="15.4" fill="#111" transform="matrix(0.9 0 0 1 61.985 0)" text-anchor="middle" >17</text>
<text x="619.85" y="641.2" font-size="15.4" fill="#111" transform="matrix(0.9 0 0 1 61.985 0)" text-anchor="middle" >49</text>
<rect x="633" y="588" width="21.7" height="29.8" fill="#D3D3D3"/>
<rect x="633" y="615.6" width="21.7" height="2.2" fill="#E8542A"/>
<rect x="633" y="620" width="21.7" height="29.6" fill="#D3D3D3"/>
<text x="643.85" y="608" font-size="15.4" fill="#111" transform="matrix(0.9 0 0 1 64.385 0)" text-anchor="middle" >18</text>
<text x="643.85" y="641.2" font-size="15.4" fill="#111" transform="matrix(0.9 0 0 1 64.385 0)" text-anchor="middle" >50</text>
<rect x="657" y="588" width="21.7" height="29.8" fill="#D3D3D3"/>
<rect x="657" y="615.6" width="21.7" height="2.2" fill="#E8542A"/>
<rect x="657" y="620" width="21.7" height="29.6" fill="#D3D3D3"/>
<text x="667.85" y="608" font-size="15.4" fill="#111" transform="matrix(0.9 0 0 1 66.785 0)" text-anchor="middle" >19</text>
<text x="667.85" y="641.2" font-size="15.4" fill="#111" transform="matrix(0.9 0 0 1 66.785 0)" text-anchor="middle" >51</text>
<rect x="681" y="588" width="21.7" height="29.8" fill="#D3D3D3"/>
<rect x="681" y="615.6" width="21.7" height="2.2" fill="#E8542A"/>
<rect x="681" y="620" width="21.7" height="29.6" fill="#D3D3D3"/>
<text x="691.85" y="608" font-size="15.4" fill="#111" transform="matrix(0.9 0 0 1 69.185 0)" text-anchor="middle" >20</text>
<text x="691.85" y="641.2" font-size="15.4" fill="#111" transform="matrix(0.9 0 0 1 69.185 0)" text-anchor="middle" >52</text>
<rect x="705" y="588" width="21.7" height="29.8" fill="#D3D3D3"/>
<rect x="705" y="615.6" width="21.7" height="2.2" fill="#E8542A"/>
<rect x="705" y="620" width="21.7" height="29.6" fill="#D3D3D3"/>
<text x="715.85" y="608" font-size="15.4" fill="#111" transform="matrix(0.9 0 0 1 71.585 0)" text-anchor="middle" >21</text>
<text x="715.85" y="641.2" font-size="15.4" fill="#111" transform="matrix(0.9 0 0 1 71.585 0)" text-anchor="middle" >53</text>
<rect x="729" y="588" width="21.7" height="29.8" fill="#D3D3D3"/>
<rect x="729" y="615.6" width="21.7" height="2.2" fill="#E8542A"/>
<rect x="729" y="620" width="21.7" height="29.6" fill="#D3D3D3"/>
<text x="739.85" y="608" font-size="15.4" fill="#111" transform="matrix(0.9 0 0 1 73.985 0)" text-anchor="middle" >22</text>
<text x="739.85" y="641.2" font-size="15.4" fill="#111" transform="matrix(0.9 0 0 1 73.985 0)" text-anchor="middle" >54</text>
<rect x="753" y="588" width="21.7" height="29.8" fill="#D3D3D3"/>
<rect x="753" y="615.6" width="21.7" height="2.2" fill="#E8542A"/>
<rect x="753" y="620" width="21.7" height="29.6" fill="#D3D3D3"/>
<text x="763.85" y="608" font-size="15.4" fill="#111" transform="matrix(0.9 0 0 1 76.385 0)" text-anchor="middle" >23</text>
<text x="763.85" y="641.2" font-size="15.4" fill="#111" transform="matrix(0.9 0 0 1 76.385 0)" text-anchor="middle" >55</text>
<rect x="777" y="588" width="21.7" height="29.8" fill="#D3D3D3"/>
<rect x="777" y="615.6" width="21.7" height="2.2" fill="#E8542A"/>
<rect x="777" y="620" width="21.7" height="29.6" fill="#D3D3D3"/>
<text x="787.85" y="608" font-size="15.4" fill="#111" transform="matrix(0.9 0 0 1 78.785 0)" text-anchor="middle" >24</text>
<text x="787.85" y="641.2" font-size="15.4" fill="#111" transform="matrix(0.9 0 0 1 78.785 0)" text-anchor="middle" >56</text>
<rect x="801" y="588" width="21.7" height="29.8" fill="#D3D3D3"/>
<rect x="801" y="620" width="21.7" height="29.6" fill="#D3D3D3"/>
<text x="811.85" y="608" font-size="15.4" fill="#111" transform="matrix(0.9 0 0 1 81.185 0)" text-anchor="middle" >25</text>
<text x="811.85" y="641.2" font-size="15.4" fill="#111" transform="matrix(0.9 0 0 1 81.185 0)" text-anchor="middle" >57</text>
<rect x="825" y="588" width="21.7" height="29.8" fill="#D3D3D3"/>
<rect x="825" y="620" width="21.7" height="29.6" fill="#D3D3D3"/>
<text x="835.85" y="608" font-size="15.4" fill="#111" transform="matrix(0.9 0 0 1 83.585 0)" text-anchor="middle" >26</text>
<text x="835.85" y="641.2" font-size="15.4" fill="#111" transform="matrix(0.9 0 0 1 83.585 0)" text-anchor="middle" >58</text>
<rect x="849" y="588" width="21.7" height="29.8" fill="#D3D3D3"/>
<rect x="849" y="620" width="21.7" height="29.6" fill="#D3D3D3"/>
<text x="859.85" y="608" font-size="15.4" fill="#111" transform="matrix(0.9 0 0 1 85.985 0)" text-anchor="middle" >27</text>
<text x="859.85" y="641.2" font-size="15.4" fill="#111" transform="matrix(0.9 0 0 1 85.985 0)" text-anchor="middle" >59</text>
<rect x="873" y="588" width="21.7" height="29.8" fill="#D3D3D3"/>
<rect x="873" y="620" width="21.7" height="29.6" fill="#D3D3D3"/>
<text x="883.85" y="608" font-size="15.4" fill="#111" transform="matrix(0.9 0 0 1 88.385 0)" text-anchor="middle" >28</text>
<text x="883.85" y="641.2" font-size="15.4" fill="#111" transform="matrix(0.9 0 0 1 88.385 0)" text-anchor="middle" >60</text>
<rect x="897" y="588" width="21.7" height="29.8" fill="#D3D3D3"/>
<rect x="897" y="620" width="21.7" height="29.6" fill="#D3D3D3"/>
<text x="907.85" y="608" font-size="15.4" fill="#111" transform="matrix(0.9 0 0 1 90.785 0)" text-anchor="middle" >29</text>
<text x="907.85" y="641.2" font-size="15.4" fill="#111" transform="matrix(0.9 0 0 1 90.785 0)" text-anchor="middle" >61</text>
<rect x="921" y="588" width="21.7" height="29.8" fill="#D3D3D3"/>
<rect x="921" y="620" width="21.7" height="29.6" fill="#D3D3D3"/>
<text x="931.85" y="608" font-size="15.4" fill="#111" transform="matrix(0.9 0 0 1 93.185 0)" text-anchor="middle" >30</text>
<text x="931.85" y="641.2" font-size="15.4" fill="#111" transform="matrix(0.9 0 0 1 93.185 0)" text-anchor="middle" >62</text>
<rect x="945" y="588" width="21.7" height="29.8" fill="#D3D3D3"/>
<rect x="945" y="620" width="21.7" height="29.6" fill="#D3D3D3"/>
<text x="955.85" y="608" font-size="15.4" fill="#111" transform="matrix(0.9 0 0 1 95.585 0)" text-anchor="middle" >31</text>
<text x="955.85" y="641.2" font-size="15.4" fill="#111" transform="matrix(0.9 0 0 1 95.585 0)" text-anchor="middle" >63</text>
<rect x="969" y="588" width="21.7" height="29.8" fill="#D3D3D3"/>
<rect x="969" y="620" width="21.7" height="29.6" fill="#D3D3D3"/>
<text x="979.85" y="608" font-size="15.4" fill="#111" transform="matrix(0.9 0 0 1 97.985 0)" text-anchor="middle" >32</text>
<text x="979.85" y="641.2" font-size="15.4" fill="#111" transform="matrix(0.9 0 0 1 97.985 0)" text-anchor="middle" >64</text>
<rect x="5" y="653" width="1014" height="1.2" fill="#D06E4C"/>
<path d="M1003 632 L1019.7 641.5 L1003 651 L1008.5 641.5 Z" fill="#EE1111"/>
<text x="10.8" y="679.3" font-size="13" fill="#111" textLength="63" lengthAdjust="spacingAndGlyphs" >Base Station</text>
<rect x="97.3" y="660.3" width="195.7" height="27.2" fill="#9E9E9E"/>
<text x="107" y="679.3" font-size="15.5" fill="#fff" textLength="120" lengthAdjust="spacingAndGlyphs" >00022 - MACHINE</text>
<path d="M272.5 671 L279 677 L285.5 671" fill="none" stroke="#fff" stroke-width="1"/>
<g fill="none" stroke="#555" stroke-width="1.3" stroke-linejoin="round"><circle cx="351.7" cy="673.4" r="9.6"/><path d="M347.6 669.3 L356 677.6 M356 669.3 L347.6 677.6"/><path d="M383.6 682.3 V673.8 L394.6 663.4 L402.5 671.4 L391.9 682.3 Z"/><path d="M383.9 674.2 L391.9 681.9 M388.4 677.9 L398.2 667.4"/></g>
<polygon points="429.90,665.76 430.35,663.35 434.85,663.35 435.30,665.76 436.53,666.54 437.82,667.20 437.86,667.24 440.18,666.43 442.43,670.32 440.56,671.92 440.50,673.37 440.57,674.82 440.56,674.88 442.43,676.48 440.18,680.37 437.86,679.56 436.57,680.23 435.36,681.02 435.30,681.04 434.85,683.45 430.35,683.45 429.90,681.04 428.67,680.26 427.38,679.60 427.34,679.56 425.02,680.37 422.77,676.48 424.64,674.88 424.70,673.43 424.63,671.98 424.64,671.92 422.77,670.32 425.02,666.43 427.34,667.24 428.63,666.57 429.84,665.78" fill="none" stroke="#555" stroke-width="1.3" stroke-linejoin="round"/>
<g fill="none" stroke="#888" stroke-width="0.8"><circle cx="430.8" cy="671.2" r="1.2"/><circle cx="435.8" cy="673.6" r="1.2"/><rect x="430.2" y="675.5" width="1.6" height="2.6"/><path d="M432 671.9 L434.7 673.2 M430.8 672.4 V675.5"/></g>
<g fill="none" stroke="#555" stroke-width="1.3"><path d="M463.5 670.3 A9.6 9.6 0 0 1 481.5 670.3"/><path d="M481.8 676.1 A9.6 9.6 0 0 1 463.2 676.1"/><path d="M465 673.8 H478.5 M475 669.8 L478.7 673.8 L475 677.7"/></g>
<path d="M461 670.2 L465 670.2 L462.6 673.6 Z M480.3 676.8 L484.2 676.8 L482.6 673.4 Z" fill="#555"/>
<text x="905.3" y="678.6" font-size="12.5" fill="#111" textLength="107.7" lengthAdjust="spacingAndGlyphs" >2018-01-23 18:40:00</text>
<rect x="5" y="693" width="1014" height="23.299999999999955" fill="#CBCBCB"/>
<text x="10.2" y="710" font-size="13" fill="#D92B2B" textLength="55.2" lengthAdjust="spacingAndGlyphs" >Soft Alarm</text>
<text x="75.8" y="710" font-size="13" fill="#D92B2B" textLength="108.2" lengthAdjust="spacingAndGlyphs" >2018-01-23 18:38:00</text>
<text x="193.6" y="710" font-size="13" fill="#D92B2B" textLength="139.5" lengthAdjust="spacingAndGlyphs" >Station: 00022 - MACHINE</text>
<text x="343.2" y="710" font-size="13" fill="#D92B2B" textLength="394.5" lengthAdjust="spacingAndGlyphs" >S09 - 09, Alarm Type: Low Battery, Low Level Alarm: 3.630 lower than 3.640</text>
<rect x="5" y="716.3" width="1014" height="23.5" fill="#E8E8E8"/>
<text x="10.2" y="733.3" font-size="13" fill="#D92B2B" textLength="55.2" lengthAdjust="spacingAndGlyphs" >Soft Alarm</text>
<text x="75.8" y="733.3" font-size="13" fill="#D92B2B" textLength="108.2" lengthAdjust="spacingAndGlyphs" >2018-01-23 18:38:00</text>
<text x="193.6" y="733.3" font-size="13" fill="#D92B2B" textLength="139.5" lengthAdjust="spacingAndGlyphs" >Station: 00022 - MACHINE</text>
<text x="343.2" y="733.3" font-size="13" fill="#D92B2B" textLength="449.5" lengthAdjust="spacingAndGlyphs" >S01 - humidity, Alarm Type: Low Humidity, Low Level 1 Alarm: 55.18 lower than 60.00</text>
<rect x="5" y="739.8" width="1014" height="23.0" fill="#CBCBCB"/>
<text x="10.2" y="756.8" font-size="13" fill="#D92B2B" textLength="55.2" lengthAdjust="spacingAndGlyphs" >Soft Alarm</text>
<text x="75.8" y="756.8" font-size="13" fill="#D92B2B" textLength="108.2" lengthAdjust="spacingAndGlyphs" >2018-01-23 18:38:00</text>
<text x="193.6" y="756.8" font-size="13" fill="#D92B2B" textLength="139.5" lengthAdjust="spacingAndGlyphs" >Station: 00022 - MACHINE</text>
<text x="343.2" y="756.8" font-size="13" fill="#D92B2B" textLength="394.5" lengthAdjust="spacingAndGlyphs" >S10 - 10, Alarm Type: Low Battery, Low Level Alarm: 3.640 lower than 3.640</text>
<rect x="0" y="766" width="48" height="2" fill="#111"/>
<rect x="48" y="766" width="320" height="2" fill="#E0E0E0"/>
<rect x="368" y="766" width="329" height="2" fill="#111"/>
<rect x="697" y="766" width="45" height="2" fill="#555"/>
<rect x="742" y="766" width="282" height="2" fill="#111"/>
</svg></body></html>
